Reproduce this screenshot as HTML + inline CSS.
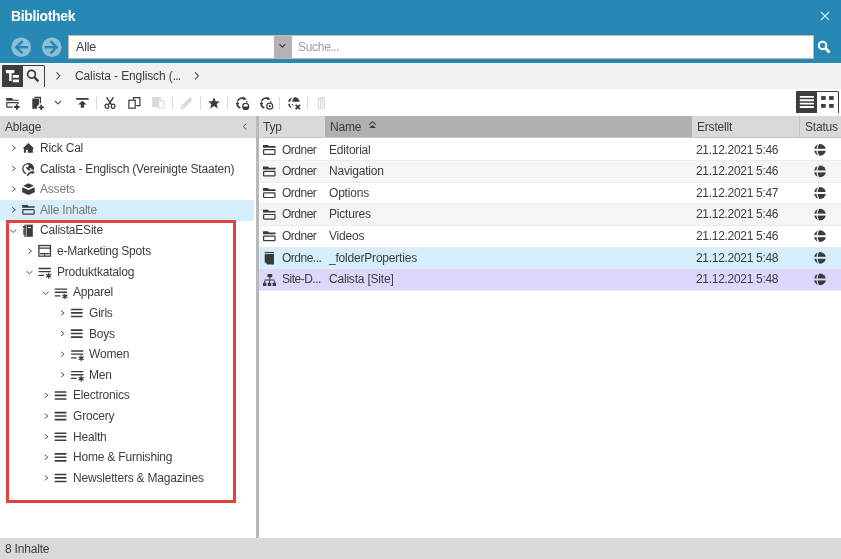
<!DOCTYPE html>
<html><head><meta charset="utf-8">
<style>
*{box-sizing:border-box;margin:0;padding:0}
html,body{width:841px;height:559px;overflow:hidden;background:#fff;font-family:"Liberation Sans",sans-serif;color:#3d3d3d;font-size:12px}
.a{position:absolute;display:block}
.t{position:absolute;white-space:nowrap;line-height:1;will-change:transform}
</style></head><body>
<div class="a" style="left:0;top:0;width:841px;height:63px;background:#2789b3"></div>
<div class="t" style="left:10.6px;top:8.85px;font-size:14px;letter-spacing:-0.35px;color:#fff;font-weight:bold">Bibliothek</div>
<svg class="a" style="left:819px;top:10px" width="13" height="13" viewBox="0 0 13 13"><path d="M2 2L10 10M10 2L2 10" stroke="#d4e9f3" stroke-width="1.1"/></svg>
<svg class="a" style="left:0px;top:30px" width="71" height="33" viewBox="0 0 71 33"><circle cx="21.15" cy="17.3" r="9.8" fill="#8bbfd6"/><path d="M16.2 17.3H28.2M22.5 11.2L16.3 17.3L22.5 23.4" stroke="#2789b3" stroke-width="2.5" fill="none"/><circle cx="51.8" cy="17.3" r="9.8" fill="#8bbfd6"/><path d="M44.8 17.3H56.8M50.5 11.2L56.7 17.3L50.5 23.4" stroke="#2789b3" stroke-width="2.5" fill="none"/></svg>
<div class="a" style="left:68px;top:35px;width:746px;height:24px;background:#fff;border:1px solid #c2b8b2"></div>
<div class="a" style="left:274px;top:36px;width:18px;height:22px;background:#b4b2b2"></div>
<svg class="a" style="left:278px;top:42px" width="11" height="8" viewBox="0 0 11 8"><path d="M1.4 2.2L4.4 5.2L7.4 2.2" stroke="#3d3d3d" stroke-width="1.1" fill="none"/></svg>
<div class="t" style="left:75.9px;top:41.22px;font-size:12.5px;letter-spacing:-0.2px">Alle</div>
<div class="t" style="left:298.2px;top:40.74px;font-size:12px;letter-spacing:-0.3px;color:#9b9b9b">Suche<span style='letter-spacing:-0.6px'>...</span></div>
<svg class="a" style="left:815px;top:38px" width="19" height="19" viewBox="0 0 19 19"><circle cx="7.6" cy="7.4" r="3.7" stroke="#fff" stroke-width="2.1" fill="none"/><path d="M10.2 10L14.6 14.4" stroke="#fff" stroke-width="2.8" stroke-linecap="butt"/></svg>
<div class="a" style="left:0;top:63px;width:841px;height:1px;background:#faf6f4"></div>
<div class="a" style="left:0;top:64px;width:841px;height:24.5px;background:#f0f0f0"></div>
<div class="a" style="left:2px;top:65.3px;width:43px;height:21.5px;border-top:1.2px solid #3d3d3d;border-right:1.2px solid #3d3d3d;border-radius:0 2px 0 0"></div>
<div class="a" style="left:2px;top:65.3px;width:21px;height:21.5px;background:#3d3d3d;border-radius:2px 0 0 0"></div>
<svg class="a" style="left:0px;top:62px" width="25" height="27" viewBox="0 0 25 27"><path d="M5.9 8H14.3V11.3H11.6V13.1H12.8V15.8H19V13.1H12.8V13.1H11.6V17.5H12.8V20.2H19V17.5H12.8V17.5H11.6V19H9.2V11.3H5.9Z" fill="#fff"/></svg>
<svg class="a" style="left:24px;top:62px" width="21" height="27" viewBox="0 0 21 27"><circle cx="7.5" cy="12.2" r="3.9" stroke="#3d3d3d" stroke-width="1.7" fill="none"/><path d="M10.3 15.1L14.4 19.4" stroke="#3d3d3d" stroke-width="2.3"/></svg>
<svg class="a" style="left:55px;top:71px" width="7" height="10" viewBox="0 0 7 10"><g transform="translate(0.5 0.3)"><path d="M1 1L4.4 4.5L1 8" stroke="#555" stroke-width="1.15" fill="none"/></g></svg>
<div class="t" style="left:75.2px;top:70.04px;font-size:12px;letter-spacing:-0.12px">Calista - Englisch (<span style='letter-spacing:-0.8px'>...</span></div>
<svg class="a" style="left:194px;top:71px" width="7" height="10" viewBox="0 0 7 10"><g transform="translate(0 0.3)"><path d="M1 1L4.4 4.5L1 8" stroke="#555" stroke-width="1.15" fill="none"/></g></svg>
<div class="a" style="left:0;top:88.5px;width:841px;height:27.5px;background:#fff"></div>
<div class="a" style="left:95.9px;top:97px;width:1px;height:12.6px;background:#d8d8d8"></div>
<div class="a" style="left:172.1px;top:97px;width:1px;height:12.6px;background:#d8d8d8"></div>
<div class="a" style="left:200.0px;top:97px;width:1px;height:12.6px;background:#d8d8d8"></div>
<div class="a" style="left:227.1px;top:97px;width:1px;height:12.6px;background:#d8d8d8"></div>
<div class="a" style="left:278.9px;top:97px;width:1px;height:12.6px;background:#d8d8d8"></div>
<div class="a" style="left:307.0px;top:97px;width:1px;height:12.6px;background:#d8d8d8"></div>
<svg class="a" style="left:3px;top:93px" width="21" height="21" viewBox="0 0 21 21"><path d="M3.2 5H8.9L10 6.8H15.7V7.7H3.2Z" fill="#3b3b3b"/><path d="M9.7 14.1H3.8V9.7H15.1V10.9" stroke="#3b3b3b" stroke-width="1.2" fill="none" stroke-linejoin="round"/><path d="M13.8 11.3V16.7M11.1 14H16.5" stroke="#3b3b3b" stroke-width="1.9"/></svg>
<svg class="a" style="left:28px;top:93px" width="21" height="21" viewBox="0 0 21 21"><path d="M6.4 4.4H12.4V10.3" stroke="#3b3b3b" stroke-width="1.2" fill="none"/><path d="M4.3 5.4H11.1V11.2L9 13.4V15.7H4.3Z" fill="#3b3b3b"/><path d="M13.2 11.7V16.9M10.6 14.3H15.8" stroke="#3b3b3b" stroke-width="1.7"/></svg>
<svg class="a" style="left:53px;top:99px" width="11" height="9" viewBox="0 0 11 9"><path d="M2 2L5 5L8 2" stroke="#555" stroke-width="1.1" fill="none"/></svg>
<svg class="a" style="left:72px;top:93px" width="21" height="21" viewBox="0 0 21 21"><path d="M4.1 5H16.6V6.8H4.1Z" fill="#3b3b3b"/><path d="M10.4 7.7L14.7 11.6H12V14.7H8.8V11.6H6.1Z" fill="#3b3b3b"/></svg>
<svg class="a" style="left:100px;top:93px" width="21" height="21" viewBox="0 0 21 21"><path d="M6.6 4.3L11.6 11.8M13.4 4.3L8.4 11.8" stroke="#3b3b3b" stroke-width="1.5" fill="none"/><ellipse cx="6.9" cy="13.3" rx="1.75" ry="2.15" stroke="#3b3b3b" stroke-width="1.25" fill="#fff" transform="rotate(-15 6.9 13.3)"/><ellipse cx="13.1" cy="13.3" rx="1.75" ry="2.15" stroke="#3b3b3b" stroke-width="1.25" fill="#fff" transform="rotate(15 13.1 13.3)"/></svg>
<svg class="a" style="left:124px;top:93px" width="21" height="21" viewBox="0 0 21 21"><path d="M9.5 6.4V4.7H15.9V12.6H12.2" stroke="#3b3b3b" stroke-width="1.2" fill="none"/><rect x="4.9" y="7.2" width="6.3" height="8" stroke="#3b3b3b" stroke-width="1.2" fill="none"/></svg>
<svg class="a" style="left:148px;top:93px" width="21" height="21" viewBox="0 0 21 21"><path d="M4.1 3.9H12.9V7.2H10V14.3H4.1Z" fill="#dadada"/><rect x="10.6" y="7.8" width="5.4" height="7.2" rx="0.6" stroke="#dadada" stroke-width="1.2" fill="#fff"/></svg>
<svg class="a" style="left:176px;top:93px" width="21" height="21" viewBox="0 0 21 21"><path d="M13.8 4.2L16.6 7L7.6 16L4.3 16.3L4.8 13.2Z" fill="#dadada"/><path d="M5.6 12.4L8.5 15.3" stroke="#fff" stroke-width="0.9"/></svg>
<svg class="a" style="left:204px;top:93px" width="21" height="21" viewBox="0 0 21 21"><path d="M10 4.3L11.7 8.3L15.9 8.4L12.7 11.1L13.8 15.4L10 13L6.2 15.4L7.3 11.1L4.1 8.4L8.3 8.3Z" fill="#3b3b3b"/></svg>
<svg class="a" style="left:233px;top:93px" width="21" height="21" viewBox="0 0 21 21"><path d="M4.7 8A5 5 0 0 1 11.7 5.7" stroke="#3b3b3b" stroke-width="1.7" fill="none"/><path d="M10.7 3.6L13.5 6.4L10 7.1Z" fill="#3b3b3b"/><path d="M4.1 10.3A5 5 0 0 0 7.4 15" stroke="#3b3b3b" stroke-width="1.7" fill="none"/><path d="M2.7 11L4.5 8.2L6.3 11Z" fill="#3b3b3b"/><path d="M13.3 8.1L14.4 9.3" stroke="#3b3b3b" stroke-width="1.2"/><circle cx="12.7" cy="13.4" r="3" stroke="#3b3b3b" stroke-width="1.2" fill="#fff"/><path d="M9.7 13.6H15.7A3 3 0 0 1 9.7 13.6Z" fill="#3b3b3b"/></svg>
<svg class="a" style="left:257px;top:93px" width="21" height="21" viewBox="0 0 21 21"><path d="M4.7 8A5 5 0 0 1 11.7 5.7" stroke="#3b3b3b" stroke-width="1.7" fill="none"/><path d="M10.7 3.6L13.5 6.4L10 7.1Z" fill="#3b3b3b"/><path d="M4.1 10.3A5 5 0 0 0 7.4 15" stroke="#3b3b3b" stroke-width="1.7" fill="none"/><path d="M2.7 11L4.5 8.2L6.3 11Z" fill="#3b3b3b"/><path d="M13.3 8.1L14.4 9.3" stroke="#3b3b3b" stroke-width="1.2"/><circle cx="12.7" cy="13.2" r="3" stroke="#3b3b3b" stroke-width="1.2" fill="#fff"/><circle cx="12.7" cy="13.2" r="1.1" fill="#3b3b3b"/></svg>
<svg class="a" style="left:284px;top:93px" width="21" height="21" viewBox="0 0 21 21"><path d="M8.4 4.2A6 6 0 0 0 4.1 8.8H6.3A9 9 0 0 1 8.4 4.2Z" fill="#3b3b3b"/><path d="M10.6 4A6 6 0 0 1 15.8 8.8H8.1A8 8 0 0 1 10.6 4Z" fill="#3b3b3b"/><path d="M4.1 10.7H5.8A9 9 0 0 0 7.9 15.4A6 6 0 0 1 4.1 10.7Z" fill="#3b3b3b"/><path d="M7.6 10.9L9 10.9L9.6 13.6Z" fill="#3b3b3b"/><path d="M11.6 11.8L16 16.2M16 11.8L11.6 16.2" stroke="#3b3b3b" stroke-width="1.9"/></svg>
<svg class="a" style="left:311px;top:93px" width="21" height="21" viewBox="0 0 21 21"><path d="M6.3 5.6H14.7M8.1 4.6H12.7" stroke="#dadada" stroke-width="1.2"/><rect x="7.5" y="7.2" width="5.9" height="8.1" stroke="#dadada" stroke-width="1.1" fill="none"/><path d="M9.5 7.2V15.3M11.4 7.2V15.3" stroke="#dadada" stroke-width="1"/></svg>
<div class="a" style="left:796px;top:91px;width:43px;height:22px;border-top:1.1px solid #3d3d3d;border-right:1.1px solid #3d3d3d;border-radius:0 2px 0 0"></div>
<div class="a" style="left:796px;top:91px;width:21px;height:22px;background:#3d3d3d;border-radius:2px 0 0 0"></div>
<svg class="a" style="left:796px;top:91px" width="44" height="23" viewBox="0 0 44 23"><path d="M4.6 5.9H17.2M4.6 9.2H17.2M4.6 12.6H17.2M4.6 16H17.2" stroke="#fff" stroke-width="1.9" stroke-linecap="round"/><rect x="25.1" y="5.1" width="4.6" height="3.8" fill="#3d3d3d"/><rect x="33.1" y="5.1" width="4.6" height="3.8" fill="#3d3d3d"/><rect x="25.1" y="13" width="4.6" height="3.8" fill="#3d3d3d"/><rect x="33.1" y="13" width="4.6" height="3.8" fill="#3d3d3d"/></svg>
<div class="a" style="left:0;top:116px;width:841px;height:22px;background:#d9d9d9"></div>
<div class="t" style="left:5px;top:120.54px;font-size:12px;letter-spacing:-0.2px">Ablage</div>
<svg class="a" style="left:242px;top:122px" width="7" height="10" viewBox="0 0 7 10"><g transform="translate(0 0.5)"><path d="M4.4 1L1.2 4L4.4 7" stroke="#555" stroke-width="1" fill="none"/></g></svg>
<div class="a" style="left:325px;top:116px;width:367px;height:21.3px;background:#b1afaf"></div>
<div class="a" style="left:799px;top:116px;width:1px;height:21.3px;background:#c3c3c3"></div>
<div class="a" style="left:259px;top:137.3px;width:582px;height:1px;background:#c9c9c9"></div>
<div class="t" style="left:263px;top:120.54px;font-size:12px;letter-spacing:-0.2px">Typ</div>
<div class="t" style="left:330px;top:120.54px;font-size:12px;letter-spacing:-0.2px">Name</div>
<svg class="a" style="left:368px;top:120px" width="10" height="10" viewBox="0 0 10 10"><g transform="translate(0 0.5)"><path d="M1.2 4.2L4.5 1.2L7.8 4.2" stroke="#3d3d3d" stroke-width="1.1" fill="none"/><path d="M1 7.6L4.5 4.4L8 7.6Z" fill="#3d3d3d"/></g></svg>
<div class="t" style="left:697px;top:120.54px;font-size:12px;letter-spacing:-0.2px">Erstellt</div>
<div class="t" style="left:804.5px;top:120.54px;font-size:12px;letter-spacing:-0.2px">Status</div>
<div class="a" style="left:0;top:199.97px;width:254px;height:20.625px;background:#d5eefb"></div>
<svg class="a" style="left:11px;top:144px" width="7" height="8" viewBox="0 0 7 8"><g transform="translate(0.2 0.5)"><path d="M1 1L4.2 3.4L1 5.8" stroke="#555" stroke-width="1" fill="none"/></g></svg>
<svg class="a" style="left:22px;top:141px" width="15" height="16" viewBox="0 0 15 16"><g transform="translate(0.2 0.1)"><path d="M6.2 1.9L11.9 7.5H10.65V11.6H5.6V8.6H3.7V11.6H1.7V7.5H0.45Z" fill="#3b3b3b"/></g></svg>
<div class="t" style="left:40.4px;top:141.94px;font-size:12px;letter-spacing:-0.2px">Rick Cal</div>
<svg class="a" style="left:11px;top:165px" width="7" height="8" viewBox="0 0 7 8"><g transform="translate(0.2 0.12)"><path d="M1 1L4.2 3.4L1 5.8" stroke="#555" stroke-width="1" fill="none"/></g></svg>
<svg class="a" style="left:22px;top:161px" width="15" height="16" viewBox="0 0 15 16"><g transform="translate(0.2 0.72)"><circle cx="5.9" cy="7.1" r="5.25" stroke="#3b3b3b" stroke-width="1.3" fill="none"/><path d="M5.4 1.2A5.9 5.9 0 0 1 11.8 7.2L9.4 7.6L8.2 6.3L6.9 6.8L5.3 5.2L6.8 3.9L5.9 2.6Z" fill="#3b3b3b"/><path d="M3.6 5.4C4.8 5.2 7 6.4 7.9 7.4C8.6 8.2 8.3 9.2 7.2 9C5.8 8.8 4.4 7.6 3.6 5.4Z" fill="#3b3b3b"/><path d="M4.3 14.6Q5.6 10.4 10 10.4" stroke="#fff" stroke-width="3.2" fill="none"/><path d="M9 7.9L14 10.6L9 13.4Z" fill="#fff"/><path d="M5.2 14Q6.2 10.9 9.9 10.6" stroke="#3b3b3b" stroke-width="1.5" fill="none"/><path d="M9.5 8.8L12.9 10.6L9.5 12.5Z" fill="#3b3b3b"/></g></svg>
<div class="t" style="left:40.4px;top:162.56px;font-size:12px;letter-spacing:-0.2px">Calista - Englisch (Vereinigte Staaten)</div>
<svg class="a" style="left:11px;top:185px" width="7" height="8" viewBox="0 0 7 8"><g transform="translate(0.2 0.75)"><path d="M1 1L4.2 3.4L1 5.8" stroke="#555" stroke-width="1" fill="none"/></g></svg>
<svg class="a" style="left:22px;top:182px" width="15" height="16" viewBox="0 0 15 16"><g transform="translate(0.2 0.35)"><path d="M6.3 0.9L11.7 3.3L6.3 5.8L0.9 3.3Z" fill="#3b3b3b"/><path d="M0 5L6.3 7.6L12.5 5V9.8L6.3 12.6L0 9.8Z" fill="#3b3b3b"/></g></svg>
<div class="t" style="left:40.4px;top:183.19px;font-size:12px;letter-spacing:-0.2px;color:#7b7878">Assets</div>
<svg class="a" style="left:11px;top:206px" width="7" height="8" viewBox="0 0 7 8"><g transform="translate(0.2 0.38)"><path d="M1 1L4.2 3.4L1 5.8" stroke="#555" stroke-width="1" fill="none"/></g></svg>
<svg class="a" style="left:22px;top:202px" width="15" height="16" viewBox="0 0 15 16"><g transform="translate(0.2 0.97)"><path d="M0 2H5.4L6.6 3.4H12.5V4.7H0Z" fill="#3b3b3b"/><rect x="0.6" y="6.7" width="11.3" height="4.4" rx="0.6" stroke="#3b3b3b" stroke-width="1.2" fill="none"/></g></svg>
<div class="t" style="left:40.4px;top:203.81px;font-size:12px;letter-spacing:-0.2px;color:#7b7878">Alle Inhalte</div>
<svg class="a" style="left:9px;top:228px" width="9" height="7" viewBox="0 0 9 7"><g transform="translate(0.2 0.8)"><path d="M1 1L4 3.6L7 1" stroke="#555" stroke-width="1" fill="none"/></g></svg>
<svg class="a" style="left:22px;top:223px" width="15" height="16" viewBox="0 0 15 16"><g transform="translate(0.2 0.6)"><path d="M2.2 1.05H10.6V13.2H2.2Z" fill="#3b3b3b"/><path d="M5.8 3.3H8.6V4.5H5.8Z" fill="#fff"/><path d="M4 1.6V12.7" stroke="#fff" stroke-width="0.8"/><path d="M0.8 3.3H3.4M0.8 6.3H3.4M0.8 8.3H3.4M0.8 10.3H3.4" stroke="#3b3b3b" stroke-width="1.1"/><path d="M0.8 2.6H3.4V4.4H0.8Z" fill="#3b3b3b"/></g></svg>
<div class="t" style="left:40.4px;top:224.44px;font-size:12px;letter-spacing:-0.2px">CalistaESite</div>
<svg class="a" style="left:27px;top:247px" width="7" height="8" viewBox="0 0 7 8"><g transform="translate(0.45 0.62)"><path d="M1 1L4.2 3.4L1 5.8" stroke="#555" stroke-width="1" fill="none"/></g></svg>
<svg class="a" style="left:38px;top:244px" width="15" height="16" viewBox="0 0 15 16"><g transform="translate(0.45 0.22)"><rect x="0.4" y="1.3" width="11.6" height="10.6" stroke="#3b3b3b" stroke-width="1.3" fill="none"/><path d="M0.4 4H12M1.5 9.3H11M6.2 9.3V11.9" stroke="#3b3b3b" stroke-width="1.2"/><path d="M1.2 9.9H5.6V11.4H1.2ZM6.8 9.9H11.4V11.4H6.8Z" fill="#bbb"/></g></svg>
<div class="t" style="left:56.65px;top:245.06px;font-size:12px;letter-spacing:-0.2px">e-Marketing Spots</div>
<svg class="a" style="left:25px;top:270px" width="9" height="7" viewBox="0 0 9 7"><g transform="translate(0.45 0.05)"><path d="M1 1L4 3.6L7 1" stroke="#555" stroke-width="1" fill="none"/></g></svg>
<svg class="a" style="left:38px;top:264px" width="15" height="16" viewBox="0 0 15 16"><g transform="translate(0.45 0.85)"><path d="M0.6 3.65H11.9M0.6 6.75H11.9M0.6 10.45H5.3" stroke="#3b3b3b" stroke-width="1.3" stroke-linecap="round"/><path d="M10.2 7.9V13.8M7.6 9.35L12.8 12.35M7.6 12.35L12.8 9.35" stroke="#3b3b3b" stroke-width="1.1"/><circle cx="10.2" cy="10.85" r="1.5" fill="#3b3b3b"/></g></svg>
<div class="t" style="left:56.65px;top:265.69px;font-size:12px;letter-spacing:-0.2px">Produktkatalog</div>
<svg class="a" style="left:41px;top:290px" width="9" height="7" viewBox="0 0 9 7"><g transform="translate(0.7 0.68)"><path d="M1 1L4 3.6L7 1" stroke="#555" stroke-width="1" fill="none"/></g></svg>
<svg class="a" style="left:54px;top:285px" width="15" height="16" viewBox="0 0 15 16"><g transform="translate(0.7 0.48)"><path d="M0.6 3.65H11.9M0.6 6.75H11.9M0.6 10.45H5.3" stroke="#3b3b3b" stroke-width="1.3" stroke-linecap="round"/><path d="M10.2 7.9V13.8M7.6 9.35L12.8 12.35M7.6 12.35L12.8 9.35" stroke="#3b3b3b" stroke-width="1.1"/><circle cx="10.2" cy="10.85" r="1.5" fill="#3b3b3b"/></g></svg>
<div class="t" style="left:72.9px;top:286.32px;font-size:12px;letter-spacing:-0.2px">Apparel</div>
<svg class="a" style="left:59px;top:309px" width="7" height="8" viewBox="0 0 7 8"><g transform="translate(0.95 0.5)"><path d="M1 1L4.2 3.4L1 5.8" stroke="#555" stroke-width="1" fill="none"/></g></svg>
<svg class="a" style="left:70px;top:306px" width="15" height="16" viewBox="0 0 15 16"><g transform="translate(0.95 0.1)"><path d="M0.6 3.4H11.1M0.6 6.8H11.1M0.6 10.4H11.1" stroke="#3b3b3b" stroke-width="1.6" stroke-linecap="round"/></g></svg>
<div class="t" style="left:89.15px;top:306.94px;font-size:12px;letter-spacing:-0.2px">Girls</div>
<svg class="a" style="left:59px;top:330px" width="7" height="8" viewBox="0 0 7 8"><g transform="translate(0.95 0.12)"><path d="M1 1L4.2 3.4L1 5.8" stroke="#555" stroke-width="1" fill="none"/></g></svg>
<svg class="a" style="left:70px;top:326px" width="15" height="16" viewBox="0 0 15 16"><g transform="translate(0.95 0.73)"><path d="M0.6 3.4H11.1M0.6 6.8H11.1M0.6 10.4H11.1" stroke="#3b3b3b" stroke-width="1.6" stroke-linecap="round"/></g></svg>
<div class="t" style="left:89.15px;top:327.57px;font-size:12px;letter-spacing:-0.2px">Boys</div>
<svg class="a" style="left:59px;top:350px" width="7" height="8" viewBox="0 0 7 8"><g transform="translate(0.95 0.75)"><path d="M1 1L4.2 3.4L1 5.8" stroke="#555" stroke-width="1" fill="none"/></g></svg>
<svg class="a" style="left:70px;top:347px" width="15" height="16" viewBox="0 0 15 16"><g transform="translate(0.95 0.35)"><path d="M0.6 3.65H11.9M0.6 6.75H11.9M0.6 10.45H5.3" stroke="#3b3b3b" stroke-width="1.3" stroke-linecap="round"/><path d="M10.2 7.9V13.8M7.6 9.35L12.8 12.35M7.6 12.35L12.8 9.35" stroke="#3b3b3b" stroke-width="1.1"/><circle cx="10.2" cy="10.85" r="1.5" fill="#3b3b3b"/></g></svg>
<div class="t" style="left:89.15px;top:348.19px;font-size:12px;letter-spacing:-0.2px">Women</div>
<svg class="a" style="left:59px;top:371px" width="7" height="8" viewBox="0 0 7 8"><g transform="translate(0.95 0.38)"><path d="M1 1L4.2 3.4L1 5.8" stroke="#555" stroke-width="1" fill="none"/></g></svg>
<svg class="a" style="left:70px;top:367px" width="15" height="16" viewBox="0 0 15 16"><g transform="translate(0.95 0.98)"><path d="M0.6 3.65H11.9M0.6 6.75H11.9M0.6 10.45H5.3" stroke="#3b3b3b" stroke-width="1.3" stroke-linecap="round"/><path d="M10.2 7.9V13.8M7.6 9.35L12.8 12.35M7.6 12.35L12.8 9.35" stroke="#3b3b3b" stroke-width="1.1"/><circle cx="10.2" cy="10.85" r="1.5" fill="#3b3b3b"/></g></svg>
<div class="t" style="left:89.15px;top:368.82px;font-size:12px;letter-spacing:-0.2px">Men</div>
<svg class="a" style="left:43px;top:392px" width="7" height="8" viewBox="0 0 7 8"><g transform="translate(0.7 0.0)"><path d="M1 1L4.2 3.4L1 5.8" stroke="#555" stroke-width="1" fill="none"/></g></svg>
<svg class="a" style="left:54px;top:388px" width="15" height="16" viewBox="0 0 15 16"><g transform="translate(0.7 0.6)"><path d="M0.6 3.4H11.1M0.6 6.8H11.1M0.6 10.4H11.1" stroke="#3b3b3b" stroke-width="1.6" stroke-linecap="round"/></g></svg>
<div class="t" style="left:72.9px;top:389.44px;font-size:12px;letter-spacing:-0.2px">Electronics</div>
<svg class="a" style="left:43px;top:412px" width="7" height="8" viewBox="0 0 7 8"><g transform="translate(0.7 0.62)"><path d="M1 1L4.2 3.4L1 5.8" stroke="#555" stroke-width="1" fill="none"/></g></svg>
<svg class="a" style="left:54px;top:409px" width="15" height="16" viewBox="0 0 15 16"><g transform="translate(0.7 0.23)"><path d="M0.6 3.4H11.1M0.6 6.8H11.1M0.6 10.4H11.1" stroke="#3b3b3b" stroke-width="1.6" stroke-linecap="round"/></g></svg>
<div class="t" style="left:72.9px;top:410.07px;font-size:12px;letter-spacing:-0.2px">Grocery</div>
<svg class="a" style="left:43px;top:433px" width="7" height="8" viewBox="0 0 7 8"><g transform="translate(0.7 0.25)"><path d="M1 1L4.2 3.4L1 5.8" stroke="#555" stroke-width="1" fill="none"/></g></svg>
<svg class="a" style="left:54px;top:429px" width="15" height="16" viewBox="0 0 15 16"><g transform="translate(0.7 0.85)"><path d="M0.6 3.4H11.1M0.6 6.8H11.1M0.6 10.4H11.1" stroke="#3b3b3b" stroke-width="1.6" stroke-linecap="round"/></g></svg>
<div class="t" style="left:72.9px;top:430.69px;font-size:12px;letter-spacing:-0.2px">Health</div>
<svg class="a" style="left:43px;top:453px" width="7" height="8" viewBox="0 0 7 8"><g transform="translate(0.7 0.88)"><path d="M1 1L4.2 3.4L1 5.8" stroke="#555" stroke-width="1" fill="none"/></g></svg>
<svg class="a" style="left:54px;top:450px" width="15" height="16" viewBox="0 0 15 16"><g transform="translate(0.7 0.48)"><path d="M0.6 3.4H11.1M0.6 6.8H11.1M0.6 10.4H11.1" stroke="#3b3b3b" stroke-width="1.6" stroke-linecap="round"/></g></svg>
<div class="t" style="left:72.9px;top:451.32px;font-size:12px;letter-spacing:-0.2px">Home &amp; Furnishing</div>
<svg class="a" style="left:43px;top:474px" width="7" height="8" viewBox="0 0 7 8"><g transform="translate(0.7 0.5)"><path d="M1 1L4.2 3.4L1 5.8" stroke="#555" stroke-width="1" fill="none"/></g></svg>
<svg class="a" style="left:54px;top:471px" width="15" height="16" viewBox="0 0 15 16"><g transform="translate(0.7 0.1)"><path d="M0.6 3.4H11.1M0.6 6.8H11.1M0.6 10.4H11.1" stroke="#3b3b3b" stroke-width="1.6" stroke-linecap="round"/></g></svg>
<div class="t" style="left:72.9px;top:471.94px;font-size:12px;letter-spacing:-0.2px">Newsletters &amp; Magazines</div>
<div class="a" style="left:6px;top:220px;width:230.3px;height:283px;border:3px solid #e2423c"></div>
<div class="a" style="left:259px;top:139.60px;width:582px;height:21.60px;background:#fff;border-bottom:1px solid #ebebeb"></div>
<svg class="a" style="left:259px;top:139px" width="21" height="29" viewBox="0 0 21 29"><g transform="translate(0 0.6)"><path d="M4 5.3H9L10 6.5H16.6V8.2H4Z" fill="#3b3b3b"/><rect x="4.6" y="10.1" width="11.4" height="4.6" rx="0.5" stroke="#3b3b3b" stroke-width="1.2" fill="none"/></g></svg>
<div class="t" style="left:282.2px;top:143.54px;font-size:12px;letter-spacing:-0.5px">Ordner</div>
<div class="t" style="left:329.4px;top:143.54px;font-size:12px;letter-spacing:-0.2px">Editorial</div>
<div class="t" style="left:696px;top:143.54px;font-size:12px;letter-spacing:-0.3px">21.12.2021 5:46</div>
<svg class="a" style="left:812px;top:141px" width="17" height="17" viewBox="0 0 17 17"><g transform="translate(0 0.8)"><circle cx="8" cy="8" r="5.9" fill="#3b3b3b"/><path d="M1.5 8H14.5" stroke="#fff" stroke-width="2"/><path d="M6.9 1.5Q3 8 6.9 14.5" stroke="#fff" stroke-width="1.1" fill="none"/></g></svg>
<div class="a" style="left:259px;top:161.20px;width:582px;height:21.60px;background:#f5f5f5;border-bottom:1px solid #ebebeb"></div>
<svg class="a" style="left:259px;top:161px" width="21" height="29" viewBox="0 0 21 29"><g transform="translate(0 0.2)"><path d="M4 5.3H9L10 6.5H16.6V8.2H4Z" fill="#3b3b3b"/><rect x="4.6" y="10.1" width="11.4" height="4.6" rx="0.5" stroke="#3b3b3b" stroke-width="1.2" fill="none"/></g></svg>
<div class="t" style="left:282.2px;top:165.14px;font-size:12px;letter-spacing:-0.5px">Ordner</div>
<div class="t" style="left:329.4px;top:165.14px;font-size:12px;letter-spacing:-0.2px">Navigation</div>
<div class="t" style="left:696px;top:165.14px;font-size:12px;letter-spacing:-0.3px">21.12.2021 5:46</div>
<svg class="a" style="left:812px;top:163px" width="17" height="17" viewBox="0 0 17 17"><g transform="translate(0 0.4)"><circle cx="8" cy="8" r="5.9" fill="#3b3b3b"/><path d="M1.5 8H14.5" stroke="#f5f5f5" stroke-width="2"/><path d="M6.9 1.5Q3 8 6.9 14.5" stroke="#f5f5f5" stroke-width="1.1" fill="none"/></g></svg>
<div class="a" style="left:259px;top:182.80px;width:582px;height:21.60px;background:#fff;border-bottom:1px solid #ebebeb"></div>
<svg class="a" style="left:259px;top:182px" width="21" height="29" viewBox="0 0 21 29"><g transform="translate(0 0.8)"><path d="M4 5.3H9L10 6.5H16.6V8.2H4Z" fill="#3b3b3b"/><rect x="4.6" y="10.1" width="11.4" height="4.6" rx="0.5" stroke="#3b3b3b" stroke-width="1.2" fill="none"/></g></svg>
<div class="t" style="left:282.2px;top:186.74px;font-size:12px;letter-spacing:-0.5px">Ordner</div>
<div class="t" style="left:329.4px;top:186.74px;font-size:12px;letter-spacing:-0.2px">Options</div>
<div class="t" style="left:696px;top:186.74px;font-size:12px;letter-spacing:-0.3px">21.12.2021 5:47</div>
<svg class="a" style="left:812px;top:185px" width="17" height="17" viewBox="0 0 17 17"><circle cx="8" cy="8" r="5.9" fill="#3b3b3b"/><path d="M1.5 8H14.5" stroke="#fff" stroke-width="2"/><path d="M6.9 1.5Q3 8 6.9 14.5" stroke="#fff" stroke-width="1.1" fill="none"/></svg>
<div class="a" style="left:259px;top:204.40px;width:582px;height:21.60px;background:#f5f5f5;border-bottom:1px solid #ebebeb"></div>
<svg class="a" style="left:259px;top:204px" width="21" height="29" viewBox="0 0 21 29"><g transform="translate(0 0.4)"><path d="M4 5.3H9L10 6.5H16.6V8.2H4Z" fill="#3b3b3b"/><rect x="4.6" y="10.1" width="11.4" height="4.6" rx="0.5" stroke="#3b3b3b" stroke-width="1.2" fill="none"/></g></svg>
<div class="t" style="left:282.2px;top:208.34px;font-size:12px;letter-spacing:-0.5px">Ordner</div>
<div class="t" style="left:329.4px;top:208.34px;font-size:12px;letter-spacing:-0.2px">Pictures</div>
<div class="t" style="left:696px;top:208.34px;font-size:12px;letter-spacing:-0.3px">21.12.2021 5:46</div>
<svg class="a" style="left:812px;top:206px" width="17" height="17" viewBox="0 0 17 17"><g transform="translate(0 0.6)"><circle cx="8" cy="8" r="5.9" fill="#3b3b3b"/><path d="M1.5 8H14.5" stroke="#f5f5f5" stroke-width="2"/><path d="M6.9 1.5Q3 8 6.9 14.5" stroke="#f5f5f5" stroke-width="1.1" fill="none"/></g></svg>
<div class="a" style="left:259px;top:226.00px;width:582px;height:21.60px;background:#fff;border-bottom:1px solid #ebebeb"></div>
<svg class="a" style="left:259px;top:226px" width="21" height="29" viewBox="0 0 21 29"><path d="M4 5.3H9L10 6.5H16.6V8.2H4Z" fill="#3b3b3b"/><rect x="4.6" y="10.1" width="11.4" height="4.6" rx="0.5" stroke="#3b3b3b" stroke-width="1.2" fill="none"/></svg>
<div class="t" style="left:282.2px;top:229.94px;font-size:12px;letter-spacing:-0.5px">Ordner</div>
<div class="t" style="left:329.4px;top:229.94px;font-size:12px;letter-spacing:-0.2px">Videos</div>
<div class="t" style="left:696px;top:229.94px;font-size:12px;letter-spacing:-0.3px">21.12.2021 5:46</div>
<svg class="a" style="left:812px;top:228px" width="17" height="17" viewBox="0 0 17 17"><g transform="translate(0 0.2)"><circle cx="8" cy="8" r="5.9" fill="#3b3b3b"/><path d="M1.5 8H14.5" stroke="#fff" stroke-width="2"/><path d="M6.9 1.5Q3 8 6.9 14.5" stroke="#fff" stroke-width="1.1" fill="none"/></g></svg>
<div class="a" style="left:259px;top:247.60px;width:582px;height:21.60px;background:#d5eefb;border-bottom:1px solid #ebebeb"></div>
<svg class="a" style="left:259px;top:238px" width="21" height="29" viewBox="0 0 21 29"><g transform="translate(0 0.1)"><path d="M5.7 13.8H15V15H5.7Z" fill="#3b3b3b"/><path d="M5.7 15.9H15V26.5H8.3L5.7 23.9Z" fill="#3b3b3b"/><path d="M5.9 24.4L7.9 26.4" stroke="#bbb" stroke-width="0.6"/></g></svg>
<div class="t" style="left:282.2px;top:251.54px;font-size:12px;letter-spacing:-0.5px">Ordne...</div>
<div class="t" style="left:329.4px;top:251.54px;font-size:12px;letter-spacing:-0.2px">_folderProperties</div>
<div class="t" style="left:696px;top:251.54px;font-size:12px;letter-spacing:-0.3px">21.12.2021 5:48</div>
<svg class="a" style="left:812px;top:249px" width="17" height="17" viewBox="0 0 17 17"><g transform="translate(0 0.8)"><circle cx="8" cy="8" r="5.9" fill="#3b3b3b"/><path d="M1.5 8H14.5" stroke="#d5eefb" stroke-width="2"/><path d="M6.9 1.5Q3 8 6.9 14.5" stroke="#d5eefb" stroke-width="1.1" fill="none"/></g></svg>
<div class="a" style="left:259px;top:269.20px;width:582px;height:21.60px;background:#dcd8fb;border-bottom:1px solid #ebebeb"></div>
<svg class="a" style="left:259px;top:268px" width="21" height="29" viewBox="0 0 21 29"><g transform="translate(0 0.4)"><path d="M8.5 5.6H13.2V8.9H8.5Z M10.4 8.9H11.4V11.1H10.4Z M5.7 11.1H15.3V12.1H5.7Z M5.2 12.1H6.2V14.3H5.2Z M10 12.1H11V14.3H10Z M14.8 12.1H15.8V14.3H14.8Z M4 14.3H7.4V17.6H4Z M8.8 14.3H12.2V17.6H8.8Z M13.6 14.3H17V17.6H13.6Z" fill="#3b3b3b"/></g></svg>
<div class="t" style="left:282.2px;top:273.14px;font-size:12px;letter-spacing:-0.5px">Site-D...</div>
<div class="t" style="left:329.4px;top:273.14px;font-size:12px;letter-spacing:-0.2px">Calista [Site]</div>
<div class="t" style="left:696px;top:273.14px;font-size:12px;letter-spacing:-0.3px">21.12.2021 5:48</div>
<svg class="a" style="left:812px;top:271px" width="17" height="17" viewBox="0 0 17 17"><g transform="translate(0 0.4)"><circle cx="8" cy="8" r="5.9" fill="#3b3b3b"/><path d="M1.5 8H14.5" stroke="#dcd8fb" stroke-width="2"/><path d="M6.9 1.5Q3 8 6.9 14.5" stroke="#dcd8fb" stroke-width="1.1" fill="none"/></g></svg>
<div class="a" style="left:256px;top:116px;width:3px;height:422px;background:#b9b9b9"></div>
<div class="a" style="left:0;top:538px;width:841px;height:21px;background:#d9d9d9"></div>
<div class="t" style="left:5.3px;top:543.14px;font-size:12px;letter-spacing:-0.2px">8 Inhalte</div>
</body></html>
